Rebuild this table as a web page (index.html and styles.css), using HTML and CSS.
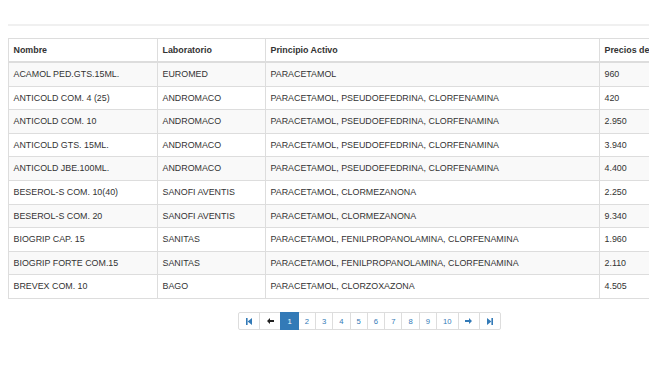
FILE: index.html
```html
<!DOCTYPE html>
<html lang="es">
<head>
<meta charset="utf-8">
<title>Medicamentos</title>
<link rel="stylesheet" href="styles.css">
</head>
<body>
<div class="topbar"></div>
<div class="container">
  <table class="grid">
    <colgroup>
      <col class="c1"><col class="c2"><col class="c3"><col class="c4">
    </colgroup>
    <thead>
      <tr><th>Nombre</th><th>Laboratorio</th><th>Principio Activo</th><th>Precios de Referencia</th></tr>
    </thead>
    <tbody>
      <tr><td>ACAMOL PED.GTS.15ML.</td><td>EUROMED</td><td>PARACETAMOL</td><td>960</td></tr>
      <tr><td>ANTICOLD COM. 4 (25)</td><td>ANDROMACO</td><td>PARACETAMOL, PSEUDOEFEDRINA, CLORFENAMINA</td><td>420</td></tr>
      <tr><td>ANTICOLD COM. 10</td><td>ANDROMACO</td><td>PARACETAMOL, PSEUDOEFEDRINA, CLORFENAMINA</td><td>2.950</td></tr>
      <tr><td>ANTICOLD GTS. 15ML.</td><td>ANDROMACO</td><td>PARACETAMOL, PSEUDOEFEDRINA, CLORFENAMINA</td><td>3.940</td></tr>
      <tr><td>ANTICOLD JBE.100ML.</td><td>ANDROMACO</td><td>PARACETAMOL, PSEUDOEFEDRINA, CLORFENAMINA</td><td>4.400</td></tr>
      <tr><td>BESEROL-S COM. 10(40)</td><td>SANOFI AVENTIS</td><td>PARACETAMOL, CLORMEZANONA</td><td>2.250</td></tr>
      <tr><td>BESEROL-S COM. 20</td><td>SANOFI AVENTIS</td><td>PARACETAMOL, CLORMEZANONA</td><td>9.340</td></tr>
      <tr><td>BIOGRIP CAP. 15</td><td>SANITAS</td><td>PARACETAMOL, FENILPROPANOLAMINA, CLORFENAMINA</td><td>1.960</td></tr>
      <tr><td>BIOGRIP FORTE COM.15</td><td>SANITAS</td><td>PARACETAMOL, FENILPROPANOLAMINA, CLORFENAMINA</td><td>2.110</td></tr>
      <tr><td>BREVEX COM. 10</td><td>BAGO</td><td>PARACETAMOL, CLORZOXAZONA</td><td>4.505</td></tr>
    </tbody>
  </table>
  <ul class="pager">
    <li><a class="icon"><svg width="6" height="7" viewBox="0 0 6 7"><rect x="0" y="0" width="1.6" height="7" fill="#337ab7"/><path d="M6 0 L1.6 3.5 L6 7 Z" fill="#337ab7"/></svg></a></li>
    <li><a class="icon dark"><svg width="7" height="6" viewBox="0 0 7 6"><path d="M0 3 L3 0 L3 2 L7 2 L7 4 L3 4 L3 6 Z" fill="#222"/></svg></a></li>
    <li class="active"><a>1</a></li>
    <li><a>2</a></li>
    <li><a>3</a></li>
    <li><a>4</a></li>
    <li><a>5</a></li>
    <li><a>6</a></li>
    <li><a>7</a></li>
    <li><a>8</a></li>
    <li><a>9</a></li>
    <li><a>10</a></li>
    <li><a class="icon"><svg width="7" height="6" viewBox="0 0 7 6"><path d="M7 3 L4 0 L4 2 L0 2 L0 4 L4 4 L4 6 Z" fill="#337ab7"/></svg></a></li>
    <li><a class="icon"><svg width="6" height="7" viewBox="0 0 6 7"><path d="M0 0 L4.4 3.5 L0 7 Z" fill="#337ab7"/><rect x="4.4" y="0" width="1.6" height="7" fill="#337ab7"/></svg></a></li>
  </ul>
</div>
</body>
</html>
```

FILE: styles.css
```css
html, body {
  margin: 0;
  padding: 0;
  overflow: hidden;
  background: #fff;
}
body {
  padding: 8px;
  font-family: "Liberation Sans", Arial, sans-serif;
  color: #333;
}
.topbar {
  height: 16px;
  border-bottom: 2px solid #f0f0f0;
  margin: 0 -8px 0 0;
}
.container {
  width: 723px;
  margin-top: 12px;
}
.grid {
  width: 723px;
  border-collapse: collapse;
  table-layout: fixed;
  border: 1px solid #ddd;
  font-size: 8.9px;
}
.c1 { width: 149px; }
.c2 { width: 108px; }
.c3 { width: 334px; }
.c4 { width: 132px; }
.grid th, .grid td {
  text-align: left;
  padding: 5px 5px 5px 4.5px;
  line-height: 12.6px;
  border: 1px solid #ddd;
  white-space: nowrap;
  overflow: hidden;
}
.grid th {
  font-weight: bold;
  border-bottom: 2px solid #ddd;
  line-height: 12px;
}
.grid tbody tr:nth-child(odd) {
  background: #f9f9f9;
}
.pager {
  list-style: none;
  margin: 13px 0 0;
  padding: 0;
  display: flex;
  justify-content: center;
}
.pager li a {
  display: flex;
  align-items: center;
  justify-content: center;
  height: 18.5px;
  min-width: 17.9px;
  box-sizing: border-box;
  padding: 0 6px;
  margin-left: -1px;
  border: 1px solid #ddd;
  background: #fff;
  color: #337ab7;
  font-size: 7.7px;
}
.pager li:first-child a {
  margin-left: 0;
  border-radius: 2px 0 0 2px;
}
.pager li:last-child a {
  border-radius: 0 2px 2px 0;
}
.pager li a.icon {
  width: 22px;
  padding: 0;
}
.pager li.active a {
  background: #337ab7;
  border-color: #337ab7;
  color: #fff;
  position: relative;
}
```
